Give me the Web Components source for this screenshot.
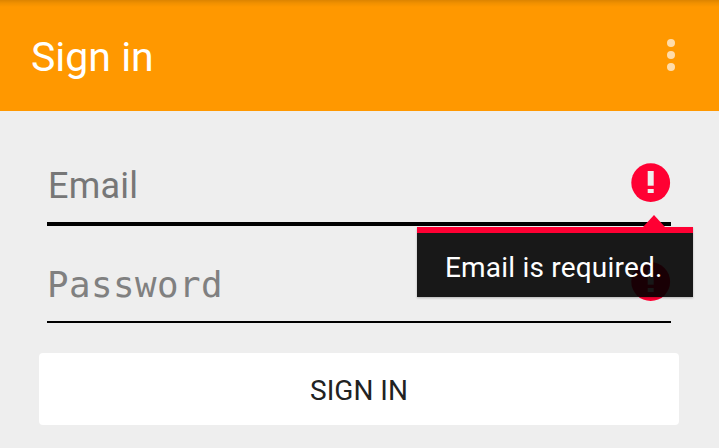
<!DOCTYPE html>
<html>
<head>
<meta charset="utf-8">
<title>Sign in</title>
<style>
  html, body { margin: 0; height: 100%; }
  body { background: #eeeeee; font-family: Roboto, "Liberation Sans", sans-serif; overflow: hidden; }
</style>
</head>
<body>
<app-bar>Sign in</app-bar>
<sign-form>
  <text-field placeholder="Email" focused>
    <error-tip>Email is required.</error-tip>
  </text-field>
  <text-field placeholder="Password" mono></text-field>
  <flat-button>SIGN IN</flat-button>
</sign-form>

<script>
class AppBar extends HTMLElement {
  constructor() {
    super();
    const shadow = this.attachShadow({ mode: 'open' });
    shadow.innerHTML = `
      <style>
        :host {
          display: flex;
          align-items: center;
          justify-content: space-between;
          height: 111px;
          padding: 0 44px 0 31px;
          box-sizing: border-box;
          background: linear-gradient(#dd8400, #f09000 3px, #ff9800 7px);
          color: #fff;
        }
        .title { font-size: 41px; line-height: 1; margin-top: 4px; }
        .dots { display: flex; flex-direction: column; gap: 4px; margin-top: -1px; }
        .dots i { width: 8px; height: 8px; border-radius: 50%; background: #ffdcaa; }
      </style>
      <span class="title"><slot></slot></span>
      <span class="dots"><i></i><i></i><i></i></span>
    `;
  }
}

class SignForm extends HTMLElement {
  constructor() {
    super();
    const shadow = this.attachShadow({ mode: 'open' });
    shadow.innerHTML = `
      <style>
        :host {
          display: flex;
          flex-direction: column;
          padding: 35px 40px 0 39px;
        }
      </style>
      <slot></slot>
    `;
  }
}

class TextField extends HTMLElement {
  constructor() {
    super();
    const shadow = this.attachShadow({ mode: 'open' });
    shadow.innerHTML = `
      <style>
        :host {
          display: flex;
          align-items: center;
          justify-content: space-between;
          position: relative;
          height: 78px;
          margin: 0 8px;
          box-sizing: border-box;
          border-bottom: 2px solid #000;
        }
        :host([focused]) { height: 80px; border-bottom-width: 4px; margin-bottom: 19px; }
        .label { font-size: 36px; color: #777; letter-spacing: 0.2px; margin-top: 3px; padding-left: 1px; }
        :host([mono]) .label { font-family: "DejaVu Sans Mono", monospace; font-size: 35.8px; color: #808080; letter-spacing: 0.45px; padding-left: 0; }
        svg { display: block; margin-top: -2px; }
      </style>
      <span class="label"></span>
      <svg width="41" height="40" viewBox="0 0 41 40">
        <circle cx="20.7" cy="19.7" r="19.4" fill="#ff0033"/>
        <rect x="17.7" y="8" width="6" height="14.7" fill="#eee"/>
        <rect x="17.7" y="26" width="6" height="4" fill="#eee"/>
      </svg>
      <slot></slot>
    `;
    shadow.querySelector('.label').textContent = this.getAttribute('placeholder');
  }
}

class ErrorTip extends HTMLElement {
  constructor() {
    super();
    const shadow = this.attachShadow({ mode: 'open' });
    shadow.innerHTML = `
      <style>
        :host {
          position: absolute;
          top: 81px;
          left: 370px;
          width: 276px;
          height: 70px;
          box-sizing: border-box;
          padding: 5px 0 0 28px;
          display: flex;
          align-items: center;
          background: rgba(0, 0, 0, 0.9);
          border-top: 6px solid #ff0033;
          box-shadow: 0 1px 2px rgba(0, 0, 0, 0.25);
          color: #fff;
          font-size: 28px;
          letter-spacing: 0.2px;
          white-space: nowrap;
          z-index: 2;
        }
        .arrow {
          position: absolute;
          top: -18px;
          left: 226px;
          width: 0;
          height: 0;
          border-left: 11px solid transparent;
          border-right: 11px solid transparent;
          border-bottom: 12px solid #ff0033;
        }
      </style>
      <span class="arrow"></span>
      <slot></slot>
    `;
  }
}

class FlatButton extends HTMLElement {
  constructor() {
    super();
    const shadow = this.attachShadow({ mode: 'open' });
    shadow.innerHTML = `
      <style>
        :host {
          display: flex;
          align-items: center;
          justify-content: center;
          height: 72px;
          margin-top: 30px;
          padding-top: 2px;
          box-sizing: border-box;
          background: #fff;
          border-radius: 4px;
          color: #222;
          font-size: 28px;
        }
      </style>
      <slot></slot>
    `;
  }
}

customElements.define('app-bar', AppBar);
customElements.define('sign-form', SignForm);
customElements.define('text-field', TextField);
customElements.define('error-tip', ErrorTip);
customElements.define('flat-button', FlatButton);
</script>
</body>
</html>
